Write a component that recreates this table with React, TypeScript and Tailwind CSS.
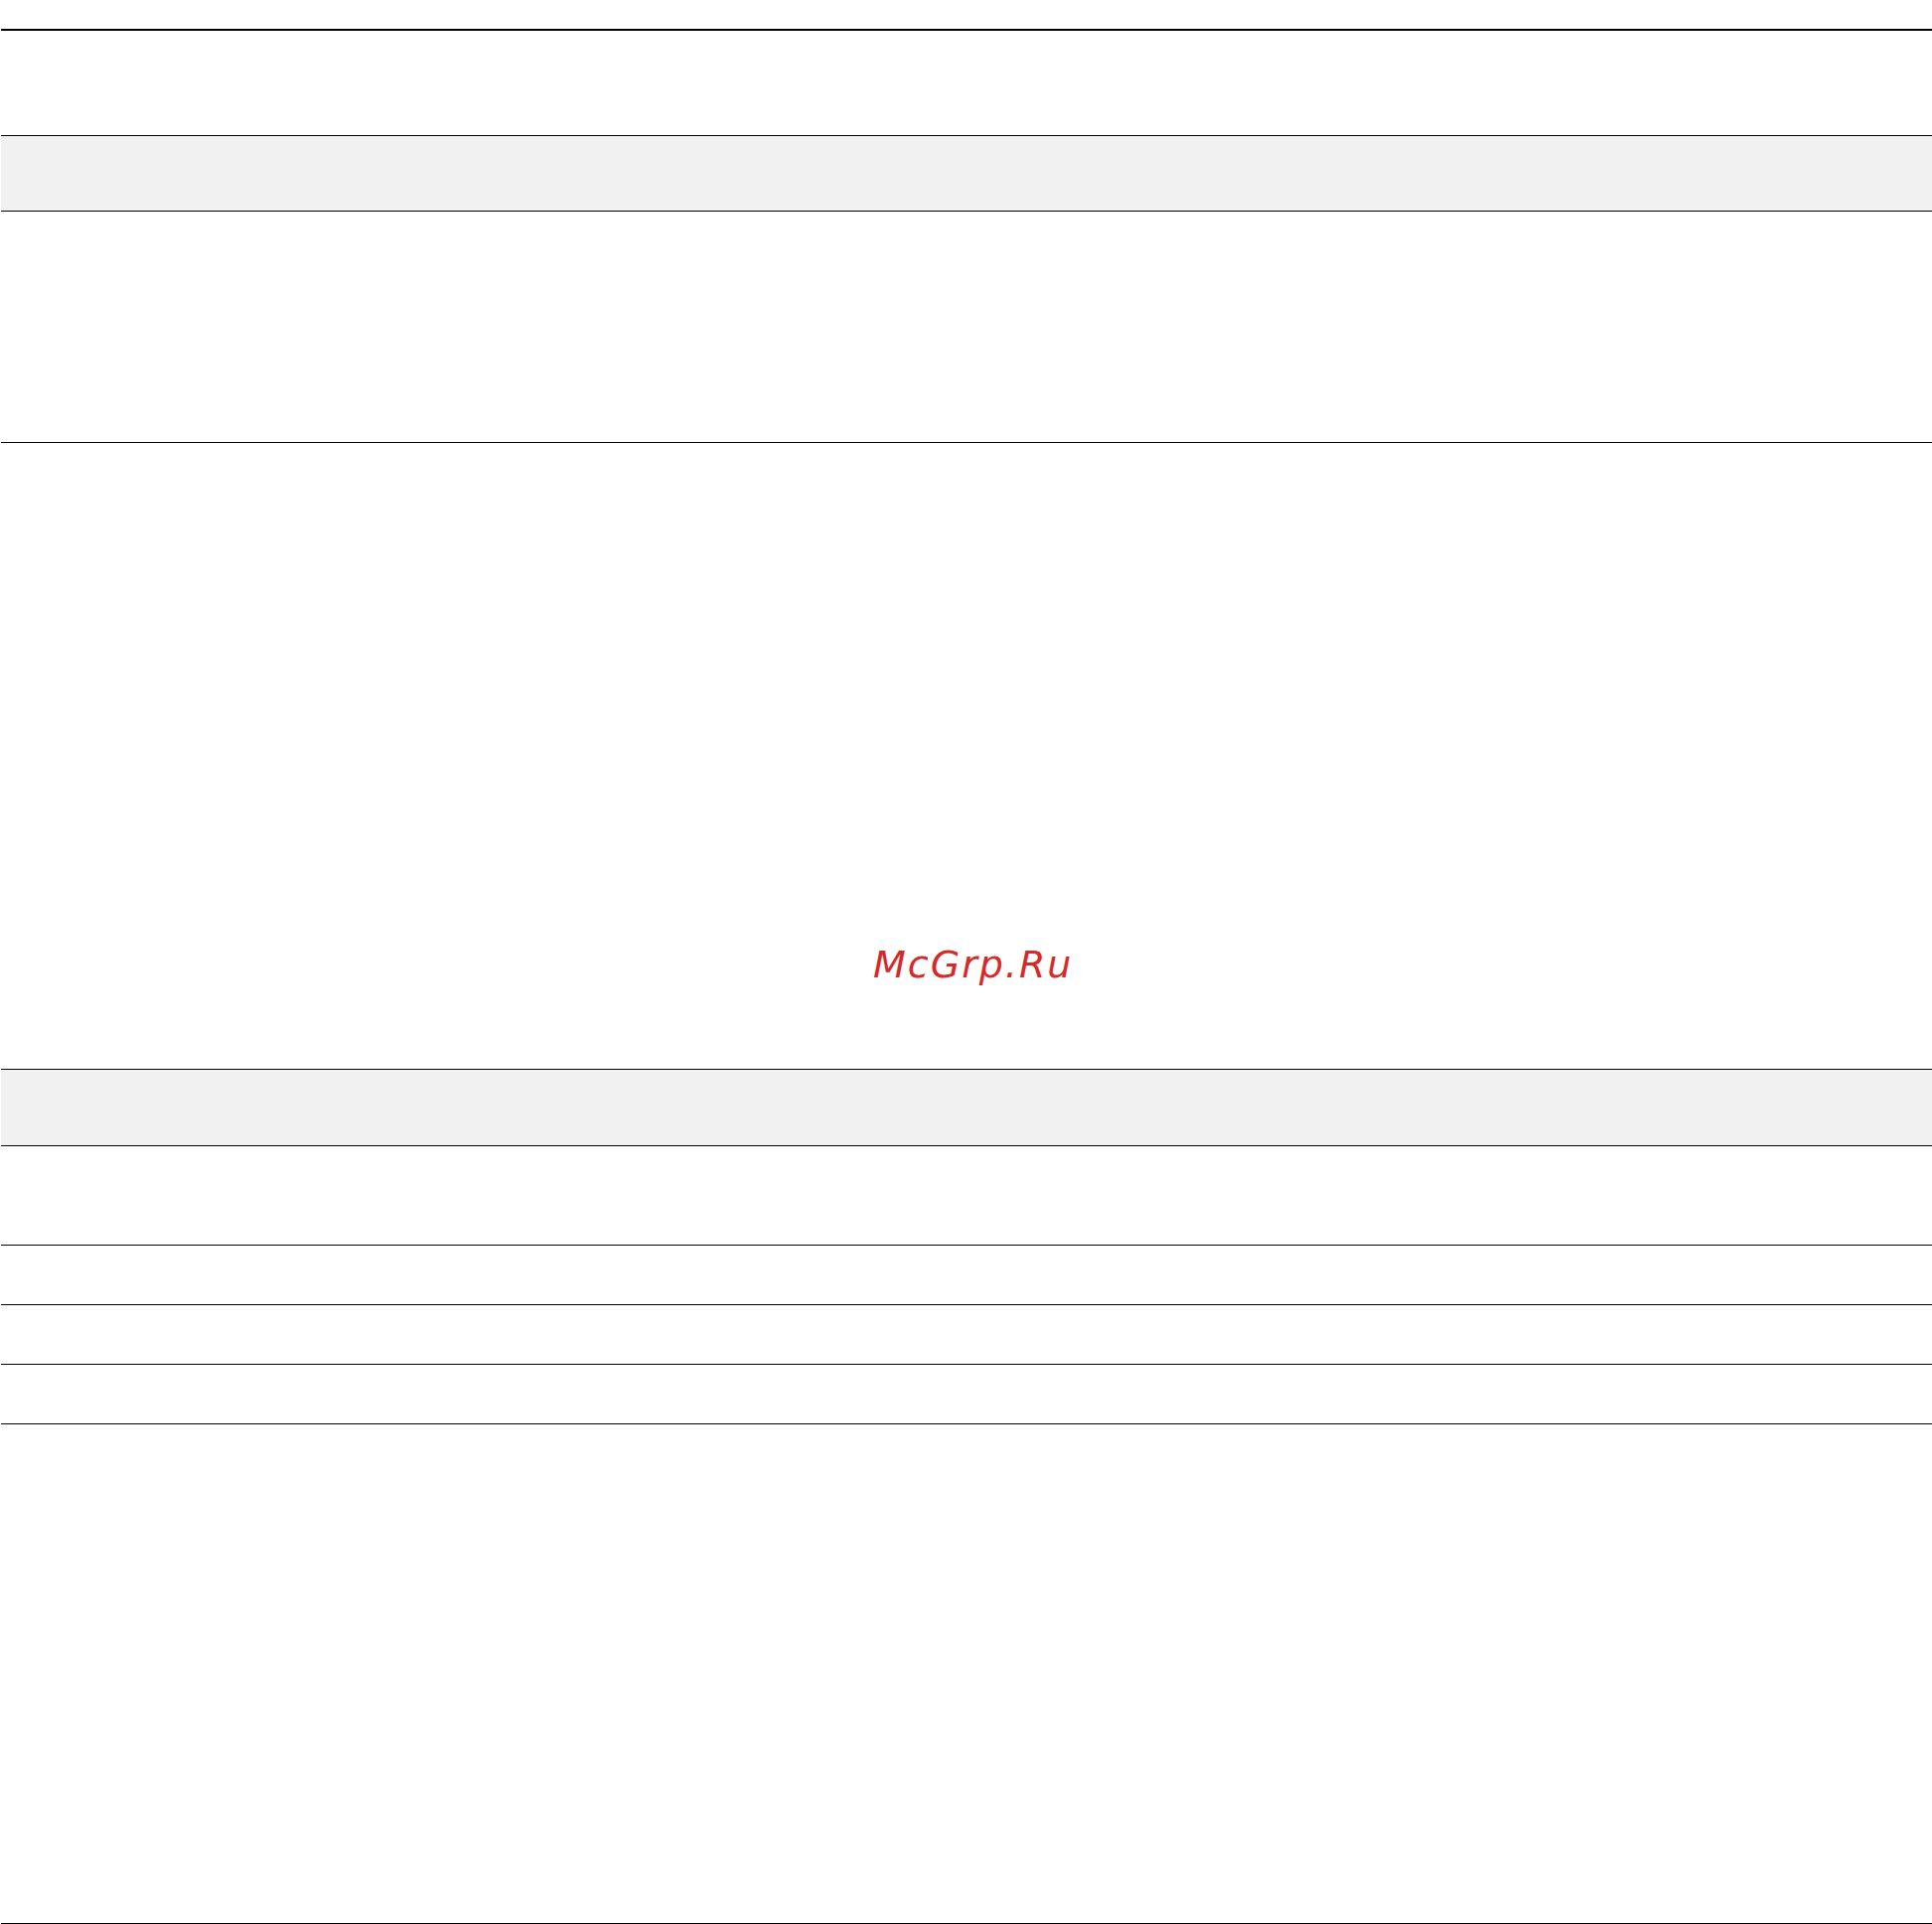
export default function App() {
  return (
    <div className="w-[1945px] h-[1937px] bg-white pl-[1px] overflow-hidden">
      <div className="h-[29px]" />
      <div className="h-[107px] border-t-2 border-black" />
      <div className="h-[76px] border-t border-black bg-[#f1f1f1]" />
      <div className="h-[233px] border-t border-black" />
      <div className="h-[631px] border-t border-black pt-[506px]">
        <div className="flex pl-[878px]">
          <span
            className="text-[38px] leading-[38px] italic tracking-[2px] text-[#d42a2a]"
            style={{ fontFamily: '"DejaVu Sans", sans-serif' }}
          >
            McGrp.Ru
          </span>
        </div>
      </div>
      <div className="h-[77px] border-t border-black bg-[#f1f1f1]" />
      <div className="h-[100px] border-t border-black" />
      <div className="h-[60px] border-t border-black" />
      <div className="h-[60px] border-t border-black" />
      <div className="h-[60px] border-t border-black" />
      <div className="h-[503px] border-t border-black" />
      <div className="h-[1px] border-t border-black" />
    </div>
  );
}
